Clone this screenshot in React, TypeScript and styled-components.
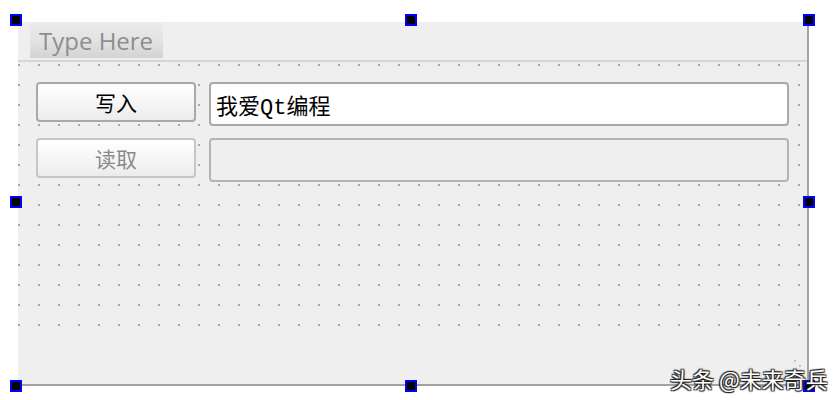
import styled, { createGlobalStyle } from 'styled-components';

const GlobalStyle = createGlobalStyle`
  html, body {
    margin: 0;
    background: #ffffff;
  }
`;

const Page = styled.div`
  position: relative;
  width: 838px;
  height: 400px;
  box-sizing: border-box;
  padding: 22px 0 0 18px;
`;

const Frame = styled.div`
  position: relative;
  width: 791px;
  height: 364px;
  box-sizing: border-box;
  display: flex;
  flex-direction: column;
  background: #efefef;
  border-right: 2px solid #a3a3a3;
  border-bottom: 2px solid #a3a3a3;
`;

const MenuBar = styled.div`
  height: 40px;
  box-sizing: border-box;
  display: flex;
  align-items: flex-start;
  padding-left: 12px;
  border-bottom: 2px solid #d6d6d6;
`;

const MenuItem = styled.div`
  width: 133px;
  height: 36px;
  box-sizing: border-box;
  padding-left: 9px;
  display: flex;
  align-items: center;
  background: linear-gradient(#ececec, #e2e2e2 55%, #d3d3d3);
  color: #8e8e8e;
  font-family: 'Open Sans', 'Noto Sans', sans-serif;
  font-size: 24px;
`;

/* designer grid: 2x2 dots every 20px */
const Central = styled.div`
  height: 268px;
  box-sizing: border-box;
  padding: 20px 18px 0 18px;
  display: grid;
  grid-template-columns: 160px 1fr;
  grid-auto-rows: 44px;
  column-gap: 13px;
  row-gap: 12px;
  align-content: start;
  background-color: #efefef;
  background-image:
    linear-gradient(to bottom, transparent 2px, #efefef 2px),
    linear-gradient(to right, #a6a6a6 2px, #efefef 2px);
  background-size: 20px 20px;
  background-position: 0 2px, 0 2px;
`;

const StatusBar = styled.div`
  flex: 1;
  position: relative;
`;

const Grip = styled.svg`
  position: absolute;
  right: 1px;
  bottom: 2px;
`;

const Button = styled.button<{ disabled?: boolean }>`
  height: 40px;
  align-self: start;
  box-sizing: border-box;
  border: 2px solid ${(p) => (p.disabled ? '#c6c6c6' : '#a9a9a9')};
  border-radius: 4px;
  background: linear-gradient(#ffffff, #f6f6f6 50%, #ececec);
  color: ${(p) => (p.disabled ? '#8a8a8a' : '#000000')};
  font-family: 'Noto Sans CJK SC', sans-serif;
  font-size: 21px;
  padding: 0;
`;

const LineEdit = styled.div<{ disabled?: boolean }>`
  height: 44px;
  box-sizing: border-box;
  border: 2px solid ${(p) => (p.disabled ? '#b4b4b4' : '#a9a9a9')};
  border-radius: 4px;
  background: ${(p) => (p.disabled ? '#efefef' : '#ffffff')};
  display: flex;
  align-items: center;
  padding-left: 5px;
  color: #000000;
  font-family: 'Liberation Mono', 'Noto Sans CJK SC', monospace;
  font-size: 22px;
`;

const Handle = styled.div<{ $x: number; $y: number }>`
  position: absolute;
  left: ${(p) => p.$x - 6}px;
  top: ${(p) => p.$y - 6}px;
  width: 12px;
  height: 12px;
  box-sizing: border-box;
  border: 2px solid #0000ff;
  background: #000000;
`;

const Watermark = styled.div`
  position: absolute;
  left: 670px;
  top: 362px;
  color: #ffffff;
  font-family: 'Noto Sans CJK SC', sans-serif;
  font-size: 22px;
  white-space: nowrap;
  text-shadow:
    1px 1px 1px #222,
    -1px 1px 1px #222,
    1px -1px 1px #222,
    -1px -1px 1px #222;
`;

const handles = [
  [-2, -2], [393, -2], [791, -2],
  [-2, 180], [791, 180],
  [-2, 364], [393, 364], [791, 364],
];

export default function App() {
  return (
    <Page>
      <GlobalStyle />
      <Frame>
        <MenuBar>
          <MenuItem>Type Here</MenuItem>
        </MenuBar>
        <Central>
          <Button>写入</Button>
          <LineEdit>我爱Qt编程</LineEdit>
          <Button disabled>读取</Button>
          <LineEdit disabled />
        </Central>
        <StatusBar>
          <Grip width="12" height="22" viewBox="0 0 12 22">
            <g fill="#c4c4c4">
              <rect x="0" y="0" width="2" height="2" />
              <rect x="5" y="5" width="2" height="2" />
              <rect x="0" y="10" width="2" height="2" />
              <rect x="5" y="15" width="2" height="2" />
            </g>
          </Grip>
        </StatusBar>
        {handles.map(([x, y]) => (
          <Handle key={`${x}-${y}`} $x={x} $y={y} />
        ))}
      </Frame>
      <Watermark>头条 @未来奇兵</Watermark>
    </Page>
  );
}
